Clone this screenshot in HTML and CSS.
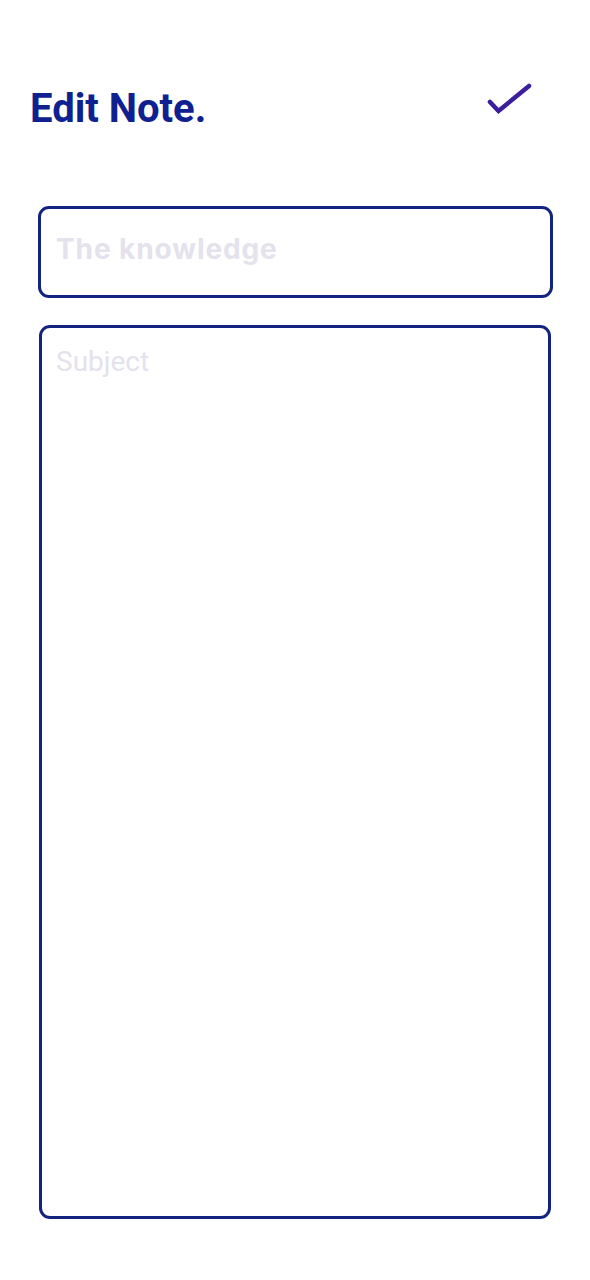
FILE: index.html
```html
<!DOCTYPE html>
<html>
<head>
<meta charset="utf-8">
<link rel="stylesheet" href="styles.css">
</head>
<body>
<div class="screen">
  <header class="topbar">
    <h1 class="title">Edit Note.</h1>
    <button class="save" aria-label="Save">
      <svg width="46" height="36" viewBox="0 0 46 36">
        <path d="M3 22 L11.5 31 L42 6" fill="none" stroke="#3b1e9e" stroke-width="4.5" stroke-linecap="round" stroke-linejoin="miter"/>
      </svg>
    </button>
  </header>
  <div class="form">
    <div class="field field-title"><span class="ph ph-title">The knowledge</span></div>
    <div class="field field-body"><span class="ph ph-body">Subject</span></div>
  </div>
</div>
</body>
</html>
```
FILE: styles.css
```css
html, body {
  margin: 0;
  padding: 0;
  background: #ffffff;
}
.screen {
  width: 590px;
  height: 1280px;
  box-sizing: border-box;
  padding: 0 37px 0 38px;
  font-family: Roboto, "Liberation Sans", sans-serif;
}
.topbar {
  display: flex;
  align-items: flex-start;
  justify-content: space-between;
  height: 206px;
  margin-left: -8px;
}
.title {
  margin: 89px 0 0 0;
  font-family: Roboto, sans-serif;
  font-weight: 700;
  font-size: 40px;
  color: #0f2191;
  line-height: 1;
}
.save {
  background: none;
  border: 0;
  padding: 0;
  margin-top: 80px;
  margin-right: 20px;
  width: 46px;
  height: 36px;
}
.save svg { display: block; }
.form {
  display: flex;
  flex-direction: column;
  gap: 27px;
}
.field {
  border: 3px solid #13237f;
  border-radius: 11px;
  box-sizing: border-box;
}
.field-title {
  height: 92px;
  padding: 26px 0 0 15px;
}
.field-body {
  height: 894px;
  margin-left: 1px;
  margin-right: 2px;
  padding: 20px 0 0 14px;
}
.ph {
  display: block;
  color: #e4e2ec;
  line-height: 1;
}
.ph-title {
  font-family: Inter, "Open Sans", sans-serif;
  font-weight: 700;
  font-size: 28px;
  letter-spacing: 0.9px;
}
.ph-body {
  font-family: Roboto, sans-serif;
  font-weight: 400;
  font-size: 28px;
}
```
